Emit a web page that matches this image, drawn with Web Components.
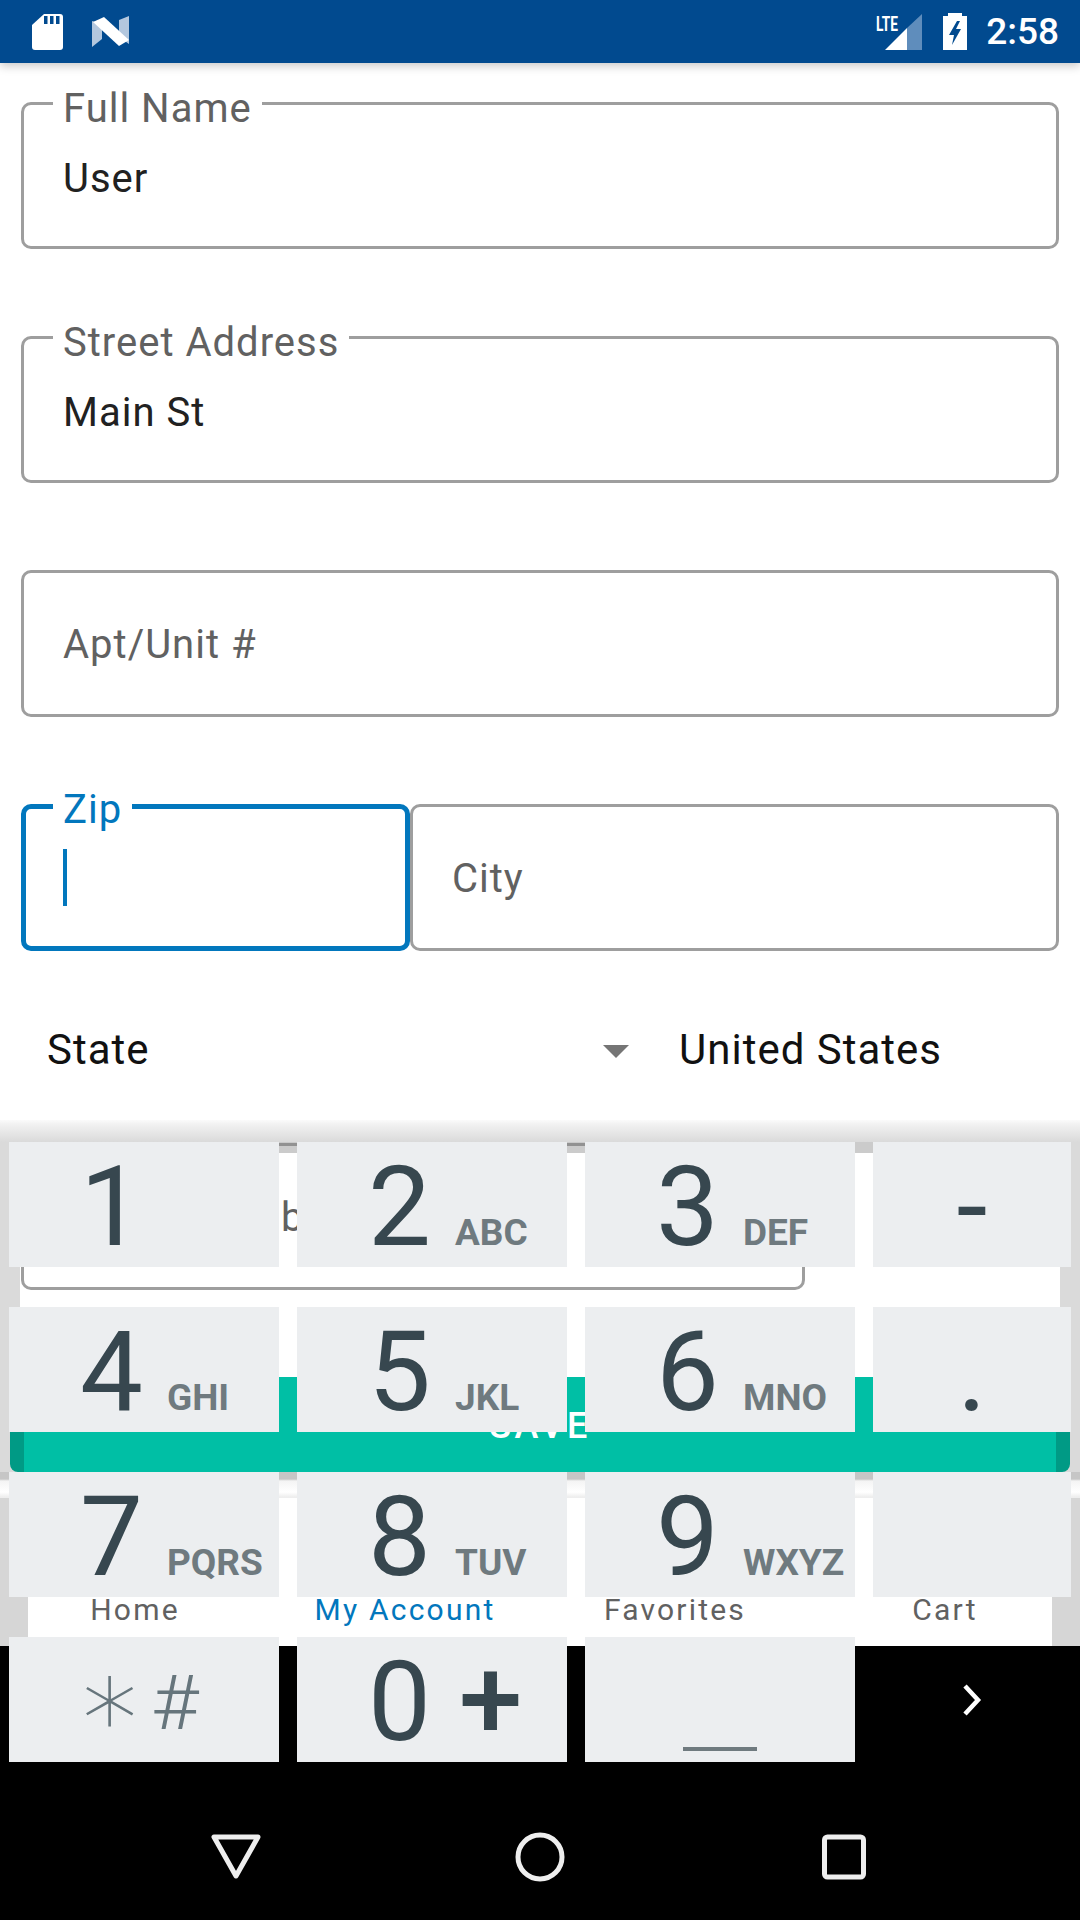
<!DOCTYPE html>
<html>
<head>
<meta charset="utf-8">
<title>Address form</title>
<style>
  html, body { margin: 0; padding: 0; background: #000; }
</style>
</head>
<body>
<phone-screen>
  <status-bar></status-bar>
  <form-top>
    <outlined-field label="Full Name">User</outlined-field>
    <outlined-field label="Street Address">Main St</outlined-field>
    <outlined-field placeholder="Apt/Unit #"></outlined-field>
    <field-row>
      <outlined-field label="Zip" focused style="width:389px"></outlined-field>
      <outlined-field placeholder="City" style="flex:1"></outlined-field>
    </field-row>
    <state-row></state-row>
  </form-top>
  <form-lower>
    <outlined-field placeholder="Phone Number" style="width:784px"></outlined-field>
    <save-button>SAVE</save-button>
  </form-lower>
  <tab-bar>
    <tab-item>Home</tab-item>
    <tab-item active>My Account</tab-item>
    <tab-item>Favorites</tab-item>
    <tab-item>Cart</tab-item>
  </tab-bar>
  <nav-bar></nav-bar>
  <key-pad>
    <key-cap letters="">1</key-cap>
    <key-cap letters="ABC">2</key-cap>
    <key-cap letters="DEF">3</key-cap>
    <key-cap side>-</key-cap>
    <key-cap letters="GHI">4</key-cap>
    <key-cap letters="JKL">5</key-cap>
    <key-cap letters="MNO">6</key-cap>
    <key-cap side>.</key-cap>
    <key-cap letters="PQRS">7</key-cap>
    <key-cap letters="TUV">8</key-cap>
    <key-cap letters="WXYZ">9</key-cap>
    <key-cap side></key-cap>
    <key-cap symbols></key-cap>
    <key-cap plus>0</key-cap>
    <key-cap space></key-cap>
    <key-next></key-next>
  </key-pad>
</phone-screen>

<script>
const FONT = `Roboto, "Liberation Sans", sans-serif`;

function define(name, html, init) {
  customElements.define(name, class extends HTMLElement {
    constructor() {
      super();
      this.attachShadow({ mode: 'open' }).innerHTML = html;
    }
    connectedCallback() {
      if (init) init(this, this.shadowRoot);
    }
  });
}

define('phone-screen', `
  <style>
    :host {
      display: block;
      position: relative;
      width: 1080px;
      height: 1920px;
      overflow: hidden;
      background: #fff;
      font-family: ${FONT};
    }
  </style>
  <slot></slot>
`);

define('status-bar', `
  <style>
    :host {
      display: flex;
      align-items: center;
      position: relative;
      z-index: 2;
      height: 63px;
      padding: 0 21px 0 32px;
      box-sizing: border-box;
      background: #014a8f;
      box-shadow: 0 3px 9px rgba(0,0,0,.22);
      color: #fff;
    }
    svg { display: block; }
    .n { margin-left: 29px; }
    .spacer { flex: 1; }
    .lte { position: relative; width: 46px; height: 36px; margin-right: 21px; }
    .lte span {
      position: absolute; left: 0; top: -2px;
      font-size: 21px;
      font-weight: 700;
      line-height: 24px;
      transform: scaleX(.65); transform-origin: left top;
    }
    .lte svg { position: absolute; left: 9px; top: 0; }
    .time { margin-left: 19px; font-size: 37px; font-weight: 500; line-height: 63px; }
  </style>
  <svg width="31" height="36" viewBox="0 0 31 36">
    <path fill="#fff" d="M12 0H28a3 3 0 0 1 3 3V33a3 3 0 0 1-3 3H3a3 3 0 0 1-3-3V11Z"/>
    <path fill="#014a8f" d="M12 2h3.5v8H12ZM18 2h3.5v8H18ZM24 2h3.5v8H24Z"/>
  </svg>
  <svg class="n" width="37" height="31" viewBox="0 0 37 31">
    <path fill="#b3c7de" d="M0 5 10 8V23L0 31ZM37 0V28L27 21V4Z"/>
    <path fill="#fff" d="M1 6 12 1 37 24 27 30Z"/>
  </svg>
  <div class="spacer"></div>
  <div class="lte">
    <svg width="37" height="36" viewBox="0 0 37 36">
      <path fill="#5f8dbc" d="M22 14 37 0V36H22Z"/>
      <path fill="#fff" d="M22 14V36H0Z"/>
    </svg>
    <span>LTE</span>
  </div>
  <svg width="24" height="37" viewBox="0 0 24 37">
    <path fill="#fff" d="M5 3V0H19V3H24V37H0V3Z"/>
    <path fill="#014a8f" d="M14 8 6 22H11L9 32 18 16H13L17 8Z"/>
  </svg>
  <div class="time">2:58</div>
`);

define('form-top', `
  <style>
    :host {
      display: flex;
      flex-direction: column;
      gap: 87px;
      padding: 39px 21px 0;
      background: #fff;
    }
  </style>
  <slot></slot>
`);

define('field-row', `
  <style>
    :host { display: flex; gap: 0; }
  </style>
  <slot></slot>
`);

define('outlined-field', `
  <style>
    :host {
      display: block;
      position: relative;
      height: 147px;
      box-sizing: border-box;
      border: 3px solid #9e9e9e;
      border-radius: 10px;
      font-size: 40px;
      letter-spacing: 1px;
      background: #fff;
    }
    :host([focused]) { border: 5px solid #0277bd; }
    .label {
      position: absolute;
      left: 29px;
      top: -19px;
      padding: 0 10px;
      line-height: 46px;
      color: #616161;
      background: #fff;
    }
    :host([focused]) .label { left: 27px; top: -22px; color: #0277bd; }
    .value {
      padding: 51px 0 0 39px;
      line-height: 46px;
      color: #212121;
      white-space: nowrap;
    }
    .hint {
      position: absolute;
      left: 39px;
      top: 49px;
      line-height: 46px;
      color: #616161;
      white-space: nowrap;
    }
    .caret {
      position: absolute;
      left: 37px;
      top: 40px;
      width: 4px;
      height: 57px;
      background: #0277bd;
    }
  </style>
`, (el, root) => {
  if (root.querySelector('.value, .hint')) return;
  const add = (cls, text) => {
    const d = document.createElement('div');
    d.className = cls;
    if (text !== null) d.textContent = text;
    root.appendChild(d);
    return d;
  };
  if (el.getAttribute('label')) add('label', el.getAttribute('label'));
  if (el.getAttribute('placeholder')) add('hint', el.getAttribute('placeholder'));
  if (el.hasAttribute('focused')) add('caret', null);
  if (el.textContent.trim()) {
    const v = add('value', null);
    v.appendChild(document.createElement('slot'));
  }
});

define('state-row', `
  <style>
    :host {
      display: flex;
      height: 93px;
      margin: -11px -21px 0;
      padding: 0 0 0 47px;
      font-size: 42px;
      letter-spacing: 1px;
      line-height: 46px;
      color: #111;
    }
    .state { width: 556px; }
    .arrow {
      width: 0; height: 0;
      margin: 18px 50px 0 0;
      border-left: 13px solid transparent;
      border-right: 13px solid transparent;
      border-top: 13px solid #757575;
    }
  </style>
  <div class="state">State</div>
  <div class="arrow"></div>
  <div>United States</div>
`);

define('form-lower', `
  <style>
    :host {
      display: block;
      position: relative;
      background: linear-gradient(#fbfbfb, #f2f2f2 4px, #dadada) no-repeat;
      background-size: 100% 22px;
      padding-top: 22px;
    }
    .edge {
      position: relative;
      background: #dadada;
    }
    .sheet {
      display: flex;
      flex-direction: column;
      gap: 87px;
      margin: 0 20px;
      padding: 1px 0 0 1px;
      background: #fff;
    }
    .dim {
      position: absolute;
      left: 9px; right: 9px; top: 0;
      height: 11px;
      background: rgba(130,130,130,.42);
    }
    .under {
      height: 26px;
      background: linear-gradient(#c6c6c6, #c6c6c6 7px, #f4f4f4 9px, #fff 20px, #eee 25px);
    }
  </style>
  <div class="edge">
    <div class="sheet"><slot></slot></div>
    <div class="dim"></div>
    <div class="under"></div>
  </div>
`);

define('save-button', `
  <style>
    :host {
      display: flex;
      align-items: center;
      justify-content: center;
      position: relative;
      height: 95px;
      margin: 0 -10px 0 -11px;
      box-sizing: border-box;
      border-left: 14px solid #009a85;
      border-right: 14px solid #009a85;
      border-radius: 0 0 8px 8px;
      background: #00bfa5;
      color: #fff;
      font-size: 36px;
      font-weight: 500;
      letter-spacing: 3.4px;
      padding-top: 3px;
    }
  </style>
  <slot></slot>
`);

define('tab-bar', `
  <style>
    :host {
      display: grid;
      grid-template-columns: repeat(4, 270px);
      height: 148px;
      background: linear-gradient(90deg, #d6d6d6 28px, #fff 28px, #fff 1052px, #d6d6d6 1052px);
    }
  </style>
  <slot></slot>
`);

define('tab-item', `
  <style>
    :host {
      display: block;
      padding-top: 94px;
      text-align: center;
      font-size: 30px;
      letter-spacing: 2.2px;
      line-height: 36px;
      color: #616161;
    }
    :host([active]) { color: #0277bd; }
  </style>
  <slot></slot>
`);

define('nav-bar', `
  <style>
    :host {
      display: grid;
      grid-template-columns: repeat(3, 304px);
      justify-items: center;
      align-items: start;
      height: 274px;
      box-sizing: border-box;
      padding: 186px 84px 0;
      background: #000;
    }
    svg { display: block; fill: none; stroke: #eee; stroke-width: 5; stroke-linejoin: round; }
  </style>
  <svg width="52" height="50" viewBox="0 0 52 50"><path d="M4 5H48L26 44Z"/></svg>
  <svg width="52" height="50" viewBox="0 0 52 50"><circle cx="26" cy="25" r="22"/></svg>
  <svg width="52" height="50" viewBox="0 0 52 50"><rect x="6.5" y="5" width="39" height="40" rx="3"/></svg>
`);

define('key-pad', `
  <style>
    :host {
      display: grid;
      position: absolute;
      z-index: 3;
      left: 9px;
      top: 1142px;
      grid-template-columns: 270px 270px 270px 198px;
      grid-auto-rows: 125px;
      gap: 40px 18px;
    }
  </style>
  <slot></slot>
`);

define('key-cap', `
  <style>
    :host {
      display: flex;
      align-items: baseline;
      position: relative;
      box-sizing: border-box;
      padding: 2px 0 0 71px;
      background: #eceef0;
      color: #37474f;
      font-size: 112px;
      line-height: 125px;
    }
    :host([side]) { justify-content: center; padding-left: 0; }
    .digit { display: block; width: 63px; text-align: center; }
    :host([side]) .digit { width: auto; }
    .letters {
      margin-left: 24px;
      font-size: 37px;
      font-weight: 700;
      color: #6f7a7f;
    }
    .plus { margin-left: 28px; font-size: 114px; font-weight: 500; transform: translateY(-2px); }
    .symbols { display: flex; align-items: baseline; color: #66757c; font-size: 82px; font-weight: 300; }
    .star { width: 76px; font-family: "DejaVu Sans", sans-serif; font-size: 111px; transform: translateY(-4px); }
    .hash { transform: translateY(-9px) scaleY(.93); }
    .bar { position: absolute; left: 98px; bottom: 11px; width: 74px; height: 4px; background: #6f7a7f; }
  </style>
`, (el, root) => {
  if (root.querySelector('span, div')) return;
  const span = (cls, text) => {
    const s = document.createElement('span');
    s.className = cls;
    if (text) s.textContent = text;
    root.appendChild(s);
    return s;
  };
  if (el.hasAttribute('symbols')) {
    el.style.paddingLeft = '66px';
    const box = span('symbols', '');
    const a = document.createElement('span');
    a.className = 'star';
    a.textContent = '\u2217';
    const b = document.createElement('span');
    b.className = 'hash';
    b.textContent = '#';
    box.append(a, b);
    return;
  }
  if (el.hasAttribute('space')) {
    span('bar', '');
    return;
  }
  const d = span('digit', '');
  d.appendChild(document.createElement('slot'));
  if (el.getAttribute('letters')) span('letters', el.getAttribute('letters'));
  if (el.hasAttribute('plus')) span('plus', '+');
});

define('key-next', `
  <style>
    :host { display: flex; align-items: center; justify-content: center; }
    svg { display: block; fill: none; stroke: #fff; stroke-width: 4.5; }
  </style>
  <svg width="24" height="32" viewBox="0 0 24 32"><path d="M5 2 18 16 5 30"/></svg>
`);
</script>
</body>
</html>
